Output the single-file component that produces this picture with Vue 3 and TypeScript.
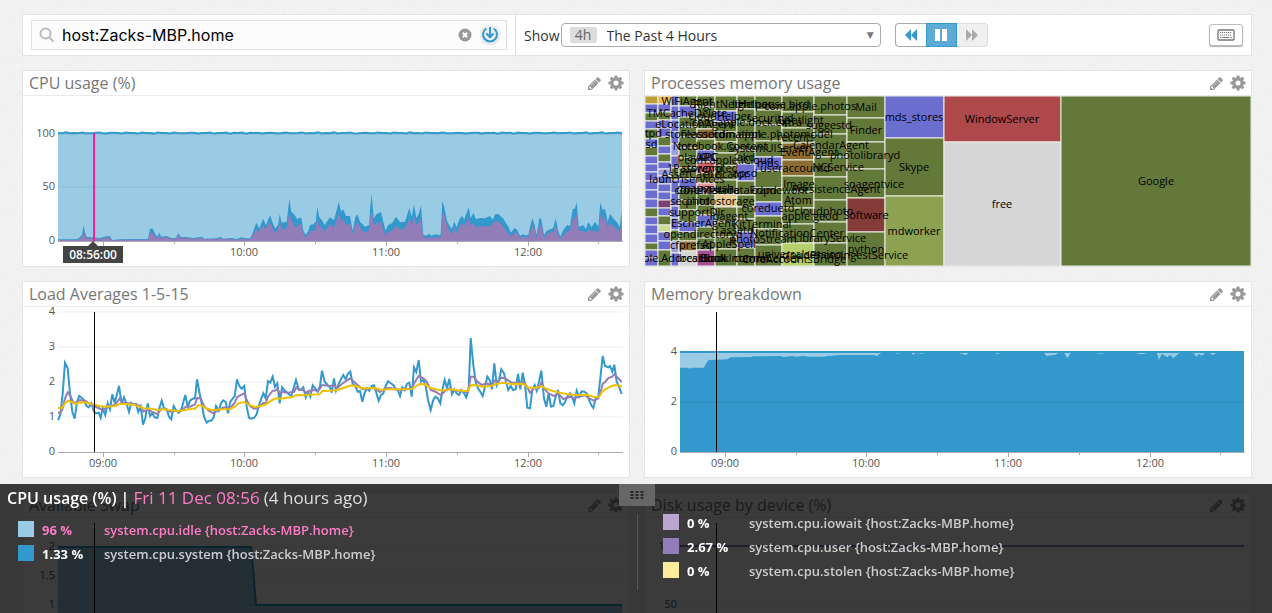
<script setup lang="ts">
import { computed, onBeforeUnmount, onMounted, ref } from 'vue'

type Point = [number, number]
interface Tick { label: string; y: number }
interface Shape { points: Point[]; color: string; opacity?: number }
interface Chart {
  title: string
  ticks: Tick[]
  areas: Shape[]
  lines: Shape[]
  cursor?: string
}

const SPAN = 1692
const BASE = 145
const LEFT = 35

/* Samples are "time,level" pairs in thirds of a pixel; shift aligns a segment on the time axis. */
function samples(text: string, shift: number, zero: number): Point[] {
  return text.trim().split(/\s+/).map((pair) => {
    const [t, level] = pair.split(',').map(Number)
    return [t + shift, BASE - (zero - level) / 3]
  })
}
function series(first: string, second: string, zero: number): Point[] {
  return [...samples(first, -114, zero), ...samples(second, 816, zero)]
}

const cpuSystem = series(
  '114,388 170,388 180,382 186,374 191,346 195,366 200,381 222,382 240,384 260,379 270,378 276,390 300,388 330,387 384,387 390,356 398,356 406,373 412,380 418,369 424,380 440,378 455,385 468,383 475,370 482,381 500,381 520,384 546,380 552,386 590,385 602,381 610,386 635,384 650,387 664,382 675,385 690,385 697,372 709,338 718,355 730,326 738,346 745,328 751,316 758,340 766,355 774,345 779,313 785,338 800,335 808,266 814,306 822,312 832,328 838,323 844,323 850,362 857,374 864,365 870,345 880,343 887,335 892,290 898,322 905,330 914,345 922,333 930,322',
  '12,330 20,300 26,276 34,305 40,298 48,318 60,318 68,362 76,322 82,313 90,335 105,350 117,345 121,290 125,252 131,325 140,312 153,306 160,335 167,362 174,345 186,340 198,320 210,337 225,335 238,294 245,320 252,283 259,325 266,312 273,286 280,374 290,377 296,371 304,377 316,373 330,376 332,370 337,274 342,288 352,335 365,357 373,335 380,352 388,328 396,318 403,328 416,292 422,325 430,308 438,328 450,324 465,325 480,318 488,330 495,313 505,312 520,326 535,350 543,368 553,354 562,360 570,377 578,373 585,376 595,375 600,350 607,325 614,345 619,374 624,350 628,324 634,328 642,375 650,362 670,354 677,325 684,360 691,380 700,360 712,345 720,348 728,298 735,295 740,277 746,350 760,346 768,357 775,336 785,352 795,335 805,350 811,278 818,300 825,296 833,335 840,312 850,325 862,338 869,352 875,305',
  393)
const cpuUser = series(
  '114,390 170,390 180,386 186,380 191,360 195,378 200,385 222,385 240,387 260,383 270,381 276,391 300,390 330,389 384,389 390,368 398,368 406,380 412,385 418,376 424,384 440,381 455,387 468,386 475,375 482,385 500,384 520,386 546,383 552,388 590,387 602,385 610,388 635,387 650,389 664,386 675,388 690,388 697,378 704,365 709,358 716,366 722,356 730,346 738,358 745,343 751,338 758,355 766,370 774,360 779,332 785,355 796,360 802,350 808,303 814,330 822,345 830,353 838,338 844,345 850,372 857,382 864,375 870,364 886,362 892,322 897,346 905,353 914,364 922,352 930,345',
  '12,352 20,330 26,310 34,332 40,328 48,345 60,340 68,374 76,345 82,335 90,352 105,368 117,360 121,320 125,300 131,345 140,340 153,335 160,360 167,378 174,365 186,362 198,347 210,357 225,355 238,326 245,344 252,318 259,345 266,338 273,325 280,383 332,382 337,308 342,315 352,350 365,373 373,355 380,370 388,350 396,340 403,345 416,325 422,348 430,338 438,352 460,348 480,350 492,335 506,334 520,350 535,370 543,380 553,370 562,368 570,382 595,382 600,365 607,345 614,360 619,383 624,365 628,345 636,350 642,384 650,372 670,365 677,346 684,372 691,386 700,375 712,365 720,360 728,330 735,325 740,310 746,362 760,363 768,370 775,358 785,365 795,360 805,368 811,312 818,330 825,320 833,352 840,338 850,350 862,358 869,366 875,330',
  393)
const load1 = series(
  '114,420 121,405 128,340 135,248 143,265 150,340 157,395 164,416 171,365 178,348 190,358 200,378 206,382 214,370 222,395 228,400 236,398 242,414 248,385 256,405 263,370 270,388 277,343 284,370 297,318 305,372 312,352 320,372 327,396 334,368 341,374 348,372 355,396 362,380 369,434 376,415 383,370 390,408 397,400 404,412 412,414 418,385 425,362 432,385 440,388 447,410 454,418 461,378 468,390 476,398 485,385 496,345 503,380 510,362 518,356 525,355 531,298 538,335 546,375 552,410 560,428 567,422 574,422 581,412 588,378 596,392 603,370 610,361 617,366 624,400 631,365 644,348 651,298 658,318 665,326 673,318 680,380 687,413 694,416 702,414 710,402 717,375 730,340 737,355 744,303 751,308 758,290 765,320 772,310 779,370 786,322 793,330 806,342 814,348 822,320 828,300 836,328 843,330 850,322 857,352 864,335 871,350 878,316 886,326 893,335 900,318 906,272 914,305 922,314 930,322',
  '5,338 12,295 18,332 26,312 33,298 40,285 47,298 54,281 61,275 68,312 76,318 83,335 90,333 97,365 104,338 111,325 118,332 125,318 132,316 139,338 146,362 153,345 160,340 167,318 174,304 182,310 190,315 196,325 203,330 210,348 217,322 224,330 231,312 238,308 245,350 252,262 259,276 266,240 273,305 280,300 287,318 294,360 302,390 309,362 316,350 323,355 331,370 338,325 344,300 351,325 358,297 366,343 373,328 380,340 387,345 394,330 401,338 409,352 416,325 422,174 430,255 437,305 444,325 451,335 458,348 465,320 472,290 479,300 486,328 493,250 500,315 507,300 514,268 522,280 528,305 535,330 542,318 549,330 557,328 564,282 571,328 578,278 585,312 592,383 600,385 607,330 614,315 620,332 627,305 634,272 642,355 649,380 656,340 663,380 670,378 677,350 684,330 691,370 698,376 705,366 712,350 720,340 727,352 733,370 740,332 747,350 755,334 762,335 770,340 777,360 784,376 790,384 797,355 805,350 811,295 818,228 825,258 835,262 840,258 847,275 853,254 860,305 867,320 875,342',
  516)
const load5 = series(
  '114,398 121,398 128,385 135,355 143,337 150,345 160,368 168,368 178,360 195,362 210,372 222,378 235,384 248,390 258,385 265,378 285,375 299,355 306,368 325,370 350,374 362,378 370,395 383,388 395,395 412,402 425,386 435,388 450,395 465,392 480,395 497,380 510,380 525,373 532,354 542,355 552,378 566,392 581,400 592,392 612,382 630,385 644,368 651,352 660,346 673,340 680,360 690,378 702,386 714,384 728,370 738,368 744,350 758,332 765,332 772,326 780,342 787,335 800,338 822,336 829,322 838,330 850,330 858,338 870,332 878,330 895,332 900,325 907,315 930,318',
  '12,315 20,325 40,308 61,295 75,308 97,328 130,323 150,336 165,325 180,324 205,330 230,328 245,325 255,305 266,288 280,295 290,305 302,330 318,336 333,346 345,333 358,325 372,332 395,332 413,338 416,325 422,290 430,290 440,302 455,315 470,310 486,318 493,302 505,304 514,293 525,295 545,308 565,308 571,318 578,305 590,318 600,338 612,325 627,325 634,308 642,325 655,340 672,348 684,340 700,357 720,350 733,356 745,350 765,346 780,357 792,362 805,355 811,340 818,312 826,305 835,294 847,290 854,282 862,292 875,306',
  516)
const load15 = series(
  '114,384 125,384 135,370 145,362 155,366 165,372 180,367 200,368 220,373 240,379 260,380 285,378 298,372 320,372 345,375 370,385 395,386 415,391 430,387 445,390 475,393 495,390 515,386 525,386 535,375 545,377 560,386 580,391 600,388 630,387 645,380 655,370 673,366 690,376 705,381 722,378 738,373 757,360 772,354 780,356 818,351 828,345 850,346 860,344 898,343 907,333 930,332',
  '25,329 45,322 65,316 80,319 95,325 135,324 155,330 180,327 200,328 245,327 268,312 285,313 300,323 335,332 360,328 400,333 413,333 422,316 435,315 458,320 485,317 497,312 520,308 545,312 580,311 595,323 620,323 634,318 648,326 668,333 690,338 710,342 735,345 770,344 792,351 807,350 818,333 840,320 855,315 875,319',
  516)
const memoryUsed = samples(
  '99,263 115,263 120,265 128,265 130,263 158,263 163,252 170,240 217,238 225,232 275,231 280,229 350,228 355,231 380,228 385,230 405,228 420,230 458,230 462,228 500,225 580,225 587,228 598,219 630,219 640,221 645,219 672,219 678,224 684,219 700,221 705,219 790,219 800,222 808,225 815,219 880,219 887,222 893,219 1002,219 1008,228 1030,224 1038,219 1052,219 1060,235 1068,219 1130,219 1145,221 1150,219 1225,219 1245,223 1258,219 1282,219 1287,240 1294,221 1308,232 1315,224 1323,234 1338,219 1372,219 1381,230 1386,221 1393,227 1402,219 1413,219 1420,225 1430,219 1498,219',
  -99, 516).map(([t, y]): Point => [t * SPAN / 1399, y])

const flat = (y: number): Point[] => [[0, y], [SPAN, y]]
const total: Point[] = Array.from({ length: 142 }, (_, i) => [i * 12, 37 + Math.sin(i * 2.3) * Math.sin(i * 0.7) * 0.7])
const swap: Point[] = [[0, 29], [580, 29], [594, 87], [SPAN, 87]]

const LIGHT = '#9acbe4'
const BLUE = '#3398cc'
const PURPLE = '#927db8'
const charts: Record<string, Chart> = {
  cpu: {
    title: 'CPU usage (%)',
    ticks: [{ label: '0', y: 145 }, { label: '50', y: 91 }, { label: '100', y: 38 }],
    areas: [
      { points: total, color: LIGHT },
      { points: cpuSystem, color: BLUE },
      { points: cpuUser, color: PURPLE },
    ],
    lines: [{ points: total, color: BLUE }],
    cursor: '08:56:00',
  },
  load: {
    title: 'Load Averages 1-5-15',
    ticks: [0, 1, 2, 3, 4].map((n) => ({ label: String(n), y: BASE - n * 35 })),
    areas: [],
    lines: [
      { points: load1, color: BLUE },
      { points: load5, color: PURPLE },
      { points: load15, color: '#efc000' },
    ],
  },
  memory: {
    title: 'Memory breakdown',
    ticks: [{ label: '0', y: 145 }, { label: '2', y: 95 }, { label: '4', y: 45 }],
    areas: [{ points: flat(44), color: LIGHT }, { points: memoryUsed, color: BLUE }],
    lines: [{ points: flat(45), color: BLUE }],
  },
  swap: {
    title: 'Available Swap',
    ticks: [{ label: '2', y: 29 }, { label: '1.5', y: 58 }, { label: '1', y: 87 }],
    areas: [{ points: swap, color: LIGHT }],
    lines: [{ points: swap, color: BLUE }],
  },
  disk: {
    title: 'Disk usage by device (%)',
    ticks: [{ label: '100', y: 29 }, { label: '50', y: 87 }],
    areas: [],
    lines: [{ points: flat(28), color: PURPLE }],
  },
}
const panels = ['cpu', 'tree', 'load', 'memory', 'swap', 'disk']
const panelTitle = (id: string): string => charts[id]?.title ?? 'Processes memory usage'

const grid = ref<HTMLElement | null>(null)
const bodyWidth = ref(606)
let observer: ResizeObserver | undefined
function measure(): void {
  const body = grid.value?.querySelector('.panel-body')
  if (body) bodyWidth.value = body.clientWidth
}
onMounted(() => {
  measure()
  observer = new ResizeObserver(measure)
  if (grid.value) observer.observe(grid.value)
})
onBeforeUnmount(() => observer?.disconnect())

const plotWidth = computed(() => bodyWidth.value - 42)
const sx = (t: number): number => LEFT + (t / SPAN) * plotWidth.value
const linePath = (points: Point[]): string => points.map(([t, y]) => `${sx(t).toFixed(1)},${y.toFixed(1)}`).join(' ')
const areaPath = (points: Point[]): string => `${sx(points[0][0])},${BASE} ${linePath(points)} ${sx(SPAN)},${BASE}`
const minuteX = (minute: number): number => Math.round(LEFT + (minute / 239) * plotWidth.value)
const hours = [{ label: '09:00', at: 19 }, { label: '10:00', at: 79 }, { label: '11:00', at: 139 }, { label: '12:00', at: 199 }]
const halves = [49, 109, 169, 229]
const cursorX = computed(() => minuteX(15) + 1)

const palette: Record<string, string> = {
  g: '#637939', b: '#6b6ecf', r: '#ad494a', s: '#d6d6d6', o: '#8ca252', m: '#843c39', n: '#8c6d31',
  l: '#b5cf6b', p: '#e7cb94', k: '#d6616b', v: '#a55194', y: '#bd9e39', e: '#e7ba52',
  w: '#7b4173', c: '#cedb9c', t: '#e7969c', q: '#9c9ede',
}
/* left, right, row edges, one palette letter per row */
const columns: [number, number, number[], string][] = [
  [0, 13, [0, 8, 17, 25, 33, 43, 51, 60, 68, 76, 85, 94, 103, 112, 121, 129, 138, 147, 154, 162, 170], 'ybgbgbgbbbbbbgbbbgbb'],
  [13, 26, [0, 8, 16, 24, 32, 41, 50, 58, 66, 73, 80, 88, 96, 104, 112, 120, 129, 136, 145, 154, 170], 'ebgbbgbgbqbbbwbgcbbg'],
  [26, 34, [0, 10, 24, 36, 48, 60, 72, 84, 97, 110, 122, 134, 145, 157, 170], 'bbbbqbgbbbbgqb'],
  [34, 52, [0, 10, 21, 31, 41, 52, 62, 72, 83, 93, 104, 114, 126, 136, 145, 155, 170], 'gbggggggbgggbgns'],
  [52, 70, [0, 11, 23, 33, 43, 54, 66, 77, 87, 98, 109, 119, 131, 142, 154, 170], 'gggngbkgtggbggv'],
  [70, 92, [0, 15, 26, 36, 46, 57, 70, 84, 98, 111, 126, 141, 153, 170], 'gbggggggpgggg'],
  [92, 110, [0, 13, 26, 41, 54, 68, 85, 99, 111, 123, 136, 152, 170], 'gggggbggggbg'],
  [110, 137, [0, 14, 29, 45, 61, 75, 92, 106, 120, 133, 149, 170], 'ggggbggbggg'],
  [137, 169, [0, 16, 32, 47, 64, 80, 96, 112, 128, 147, 170], 'gggnnggggl'],
  [169, 202, [0, 19, 38, 61, 81, 104, 126, 147, 170], 'gggggggg'],
  [202, 240, [0, 22, 46, 73, 102, 136, 170], 'ggggmg'],
  [240, 299, [0, 42, 100, 170], 'bgo'],
  [299, 416, [0, 46, 170], 'rs'],
  [416, 606, [0, 170], 'g'],
]
const cells = columns.flatMap(([left, right, rows, colors]) =>
  [...colors].map((c, i) => ({ x: left, y: rows[i], w: right - left, h: rows[i + 1] - rows[i], fill: palette[c] })))
const labels: [string, number, number][] = [
  ['WiFiAgent', 42, 5], ['TMCacheDelete', 42, 17], ['eLocationAgent', 50, 28], ['storeassetd', 50, 38], ['tccd', 43, 50],
  ['playXPC', 53, 61], ['1Password', 50, 72], ['AssetCache', 46, 78], ['launchservices', 42, 83], ['contextstore', 62, 94],
  ['secinitd', 45, 105], ['supportDir', 52, 116], ['EscherAgent', 58, 127], ['opendirectoryd', 58, 138], ['cfprefsd', 46, 149],
  ['com.apple.AddressBook', 22, 162], ['ntpd', 5, 37], ['lsd', 5, 48],
  ['RightNetHelper', 88, 8], ['cloudHelper', 75, 20], ['filecoordination', 76, 38], ['Notebook.Content', 75, 50],
  ['XRC', 62, 61], ['storenoted', 65, 72], ['com.apple.iCloud', 84, 64], ['eLocator', 81, 78], ['mapspush', 62, 92],
  ['CoreMetadataFramework', 97, 94], ['photostorage', 75, 105], ['ibagent', 84, 120], ['assetd', 92, 134], ['AppleSpell', 84, 148],
  ['localBook', 57, 162], ['Book.Internal', 89, 162],
  ['lighthouse', 114, 8], ['com.apple.dock.extra', 102, 26], ['com.apple.photomodel', 128, 38], ['SystemUIServer', 124, 52],
  ['akd', 101, 61], ['mds', 123, 67], ['apsd', 100, 77], ['securityd', 125, 22], ['cdpd', 119, 94], ['coreduetd', 123, 112],
  ['KitTerminal', 117, 128], ['photoStream', 118, 143], ['commCenter', 122, 162],
  ['bird', 154, 8], ['com.apple.photos', 165, 10], ['Spotlight', 156, 24], ['recents', 151, 41], ['EventAgent', 164, 56],
  ['useraccountd', 150, 72], ['Image', 154, 88], ['Atom', 153, 104], ['apple.geod', 165, 120], ['NotificationCenter', 152, 137],
  ['universalsession', 155, 158], ['CoreAccountsBridge', 149, 163],
  ['suggestd', 184, 29], ['CalendarAgent', 186, 49], ['NCService', 193, 71], ['PersistenceAgent', 191, 93],
  ['cloudphoto', 179, 115], ['LibraryService', 185, 142], ['cloudPhotoIngestService', 200, 159],
  ['Mail', 221, 11], ['Finder', 221, 34], ['photolibraryd', 220, 59], ['soagentvice', 229, 88], ['Software', 221, 119],
  ['python', 221, 153], ['mds_stores', 269, 21], ['Skype', 269, 71], ['mdworker', 269, 135],
  ['WindowServer', 357, 23], ['free', 357, 108], ['Google', 511, 85],
]
const treeScale = computed(() => bodyWidth.value / 606)

const query = ref('host:Zacks-MBP.home')
const legend = [
  [
    { color: '#9acbe4', value: '96 %', name: 'system.cpu.idle {host:Zacks-MBP.home}', active: true },
    { color: '#3398cc', value: '1.33 %', name: 'system.cpu.system {host:Zacks-MBP.home}', active: false },
  ],
  [
    { color: '#bba5d3', value: '0 %', name: 'system.cpu.iowait {host:Zacks-MBP.home}', active: false },
    { color: '#927db8', value: '2.67 %', name: 'system.cpu.user {host:Zacks-MBP.home}', active: false },
    { color: '#ffeb9f', value: '0 %', name: 'system.cpu.stolen {host:Zacks-MBP.home}', active: false },
  ],
]
</script>

<template>
  <div class="page">
    <svg class="texture" aria-hidden="true">
      <filter id="paper">
        <feTurbulence type="fractalNoise" baseFrequency="0.5" numOctaves="2" seed="4" />
        <feColorMatrix values="0 0 0 0 0  0 0 0 0 0  0 0 0 0 0  0 0 0 0.04 0" />
      </filter>
      <rect width="100%" height="100%" filter="url(#paper)" />
    </svg>
    <header class="toolbar">
      <div class="search-zone">
        <label class="search">
          <svg class="search-icon" viewBox="0 0 16 16" aria-hidden="true"><circle cx="6.5" cy="6.5" r="5" /><path d="M10 10l4.5 4.5" /></svg>
          <input v-model="query" type="text" aria-label="Search" spellcheck="false">
          <button class="bare clear" type="button" aria-label="Clear">
            <svg viewBox="0 0 14 14" width="14" height="14"><circle cx="7" cy="7" r="6.5" fill="#999" /><path d="M4.8 4.8l4.4 4.4M9.2 4.8l-4.4 4.4" stroke="#fff" stroke-width="2" /></svg>
          </button>
          <button class="bare" type="button" aria-label="Save">
            <svg viewBox="0 0 22 22" width="22" height="22"><circle cx="11" cy="11" r="10.5" fill="#ececec" /><path d="M7.3 4.5A7 7 0 1 0 14.7 4.5" fill="none" stroke="#3398cc" stroke-width="2" /><path d="M11 3v10M7.5 9.5l3.5 3.8 3.5-3.8" fill="none" stroke="#3398cc" stroke-width="2" /></svg>
          </button>
        </label>
      </div>
      <label class="show" for="range">Show</label>
      <div class="range">
        <span class="badge">4h</span>
        <select id="range"><option>The Past 4 Hours</option></select>
        <span class="caret" aria-hidden="true">▼</span>
      </div>
      <div class="transport">
        <button class="back" type="button" aria-label="Back"><svg viewBox="0 0 12 12" width="12" height="12"><path d="M6 0v12L0 6zM12 0v12L6 6z" /></svg></button>
        <button class="pause" type="button" aria-label="Pause"><svg viewBox="0 0 12 12" width="12" height="12"><path d="M0 0h5v12H0zM7 0h5v12H7z" /></svg></button>
        <button class="next" type="button" aria-label="Forward" disabled><svg viewBox="0 0 12 12" width="12" height="12"><path d="M0 0v12l6-6zM6 0v12l6-6z" /></svg></button>
      </div>
      <button class="keys" type="button" aria-label="Keyboard shortcuts">
        <svg viewBox="0 0 18 12" width="18" height="12"><rect x="1" y="1" width="16" height="10" rx="1" fill="none" stroke="#777" stroke-width="1.3" /><path d="M3 3.5h12M3 6h12" stroke="#777" stroke-width="1.2" stroke-dasharray="1.2 .8" /><path d="M3 8.5h1.3M5.5 8.5h7M13.7 8.5H15" stroke="#777" stroke-width="1.2" /></svg>
      </button>
    </header>

    <main ref="grid" class="grid">
      <section v-for="id in panels" :key="id" class="panel">
        <div class="panel-head">
          <h2>{{ panelTitle(id) }}</h2>
          <button class="bare" type="button" aria-label="Edit">
            <svg viewBox="128 128 1536 1536" width="13" height="13" fill="#999"><path d="M491 1536l91-91-235-235-91 91v107h128v128h107zm523-928q0-22-22-22-10 0-17 7l-542 542q-7 7-7 17 0 22 22 22 10 0 17-7l542-542q7-7 7-17zm-54-192l416 416-832 832h-416v-416zm683 96q0 53-37 90l-166 166-416-416 166-165q36-38 90-38 53 0 91 38l235 234q37 39 37 91z" /></svg>
          </button>
          <button class="bare" type="button" aria-label="Settings">
            <svg viewBox="0 0 16 16" width="16" height="16"><circle cx="8" cy="8" r="4.1" fill="none" stroke="#999" stroke-width="3.2" /><g fill="#999"><path v-for="a in 8" :key="a" :transform="`rotate(${a * 45} 8 8)`" d="M6.2 3L6.7.4h2.6L9.8 3z" /></g></svg>
          </button>
        </div>
        <div class="panel-body">
          <svg v-if="charts[id]" class="chart" role="img" :aria-label="charts[id].title">
            <polygon v-for="(area, i) in charts[id].areas" :key="'a' + i" :points="areaPath(area.points)" :fill="area.color" />
            <g v-for="tick in charts[id].ticks" :key="tick.label">
              <line v-if="tick.y < BASE" class="rule" :x1="LEFT" :x2="bodyWidth - 6" :y1="tick.y" :y2="tick.y" />
              <text class="axis" x="32" :y="tick.y + 3" text-anchor="end">{{ tick.label }}</text>
            </g>
            <polyline v-for="(line, i) in charts[id].lines" :key="'l' + i" class="trend" :points="linePath(line.points)" :stroke="line.color" />
            <line class="base" :x1="LEFT" :x2="bodyWidth - 6" y1="145" y2="145" />
            <g v-for="hour in hours" :key="hour.label">
              <line class="base" :x1="minuteX(hour.at)" :x2="minuteX(hour.at)" y1="145" y2="150" />
              <text v-if="!charts[id].cursor || hour.at > 30" class="axis" :x="minuteX(hour.at)" y="160" text-anchor="middle">{{ hour.label }}</text>
            </g>
            <line v-for="half in halves" :key="half" class="base" :x1="minuteX(half)" :x2="minuteX(half)" y1="145" y2="148" />
            <g v-if="charts[id].cursor">
              <line class="hot" :x1="cursorX" :x2="cursorX" y1="37" y2="145" />
              <path class="tip" :d="`M${cursorX - 31} 150h25l5-5 5 5h25v17h-60z`" />
              <text class="tip-text" :x="cursorX - 1" y="163" text-anchor="middle">{{ charts[id].cursor }}</text>
            </g>
            <line v-else class="cursor" :x1="cursorX" :x2="cursorX" y1="5" y2="145" />
          </svg>
          <svg v-else class="chart tree" role="img" aria-label="Processes memory usage">
            <rect v-for="(cell, i) in cells" :key="i" :x="cell.x * treeScale" :y="cell.y" :width="cell.w * treeScale" :height="cell.h" :fill="cell.fill" />
            <text v-for="([name, cx, cy], i) in labels" :key="'t' + i" :x="cx * treeScale" :y="cy + 4" text-anchor="middle">{{ name }}</text>
          </svg>
        </div>
      </section>
    </main>

    <aside class="drawer">
      <button class="handle" type="button" aria-label="Resize">
        <svg viewBox="0 0 14 8" width="14" height="8"><g fill="#2b2b2b"><template v-for="r in 3" :key="r"><rect v-for="c in 3" :key="c" :x="(c - 1) * 5 + 0.5" :y="(r - 1) * 3" width="3" height="2" /></template></g></svg>
      </button>
      <h3>CPU usage (%) | <em>Fri 11 Dec 08:56</em> <span>(4 hours ago)</span></h3>
      <ul v-for="(group, g) in legend" :key="g" :class="['legend', g ? 'second' : 'first']">
        <li v-for="item in group" :key="item.name" :class="{ active: item.active }">
          <i class="swatch" :style="{ background: item.color }"></i>
          <b>{{ item.value }}</b>
          <span>{{ item.name }}</span>
        </li>
      </ul>
    </aside>
  </div>
</template>

<style>
body { margin: 0; background: #f6f6f6; }
</style>

<style scoped>
* { box-sizing: border-box; }
.page {
  position: relative;
  height: 100vh;
  overflow: hidden;
  padding: 14px 20px 0 22px;
  font-family: "Open Sans", "Noto Sans", sans-serif;
  color: #333;
}
.texture { position: absolute; inset: 0; width: 100%; height: 100%; }
button { font: inherit; cursor: pointer; }
.bare { display: flex; padding: 0; border: 0; background: none; }

.toolbar {
  position: relative;
  display: flex;
  align-items: center;
  height: 42px;
  margin-bottom: 14px;
  padding-right: 8px;
  border: 1px solid #e4e4e4;
  background: #fff;
}
.search-zone { flex: 0 1 493px; height: 40px; padding: 5px 8px; border-right: 1px solid #ddd; }
.search {
  display: flex;
  align-items: center;
  height: 30px;
  padding: 0 5px 0 7px;
  border: 1px solid #e2e2e2;
  background: #fcfcfc;
}
.search-icon { width: 16px; height: 16px; fill: none; stroke: #bbb; stroke-width: 2; }
.search input {
  flex: 1;
  min-width: 0;
  padding: 0 7px;
  border: 0;
  outline: 0;
  background: none;
  color: #000;
  font: 16px Inter, sans-serif;
}
.clear { margin-right: 7px; }
.show { margin: 0 1px 0 8px; font-size: 14px; }
.range { position: relative; flex: 0 1 320px; height: 24px; }
.range select {
  width: 100%;
  height: 24px;
  padding: 0 24px 0 45px;
  border: 1px solid #aaa;
  border-radius: 4px;
  appearance: none;
  background: #fff;
  color: #333;
  font: 14px "Open Sans", sans-serif;
}
.badge {
  position: absolute;
  left: 9px;
  top: 4px;
  width: 27px;
  border-radius: 2px;
  background: #ddd;
  color: #666;
  font-size: 14px;
  line-height: 16px;
  text-align: center;
}
.caret { position: absolute; right: 7px; top: 4px; color: #777; font: 9px/16px "DejaVu Sans", sans-serif; }
.transport { display: flex; margin-left: 14px; }
.transport button {
  display: flex;
  align-items: center;
  justify-content: center;
  width: 31px;
  height: 24px;
  padding: 0;
  border: 1px solid #aaa;
  background: #fff;
}
.transport .back { border-right: 0; border-radius: 4px 0 0 4px; fill: #3398cc; }
.transport .pause { border-color: #3398cc; background: #5babd6; fill: #fff; }
.transport .next { border-color: #ddd; border-left: 0; border-radius: 0 4px 4px 0; background: #f0f0f0; fill: #aaa; }
.keys {
  display: flex;
  align-items: center;
  justify-content: center;
  width: 34px;
  height: 22px;
  margin-left: auto;
  padding: 0;
  border: 1px solid #bbb;
  border-radius: 3px;
  background: #fff;
  box-shadow: 0 1px 1px #aaa;
}

.grid { position: relative; display: grid; grid-template-columns: repeat(2, minmax(0, 1fr)); gap: 14px; }
.panel { border: 1px solid #e4e4e4; background: #fff; }
.panel-head {
  display: flex;
  align-items: center;
  gap: 7px;
  height: 25px;
  padding: 0 5px 0 6px;
  border-bottom: 1px solid #eaeaea;
}
.panel-head h2 { flex: 1; margin: 0; color: #777; font-size: 16px; font-weight: 400; line-height: 24px; }
.panel-body { height: 170px; }
.chart { display: block; width: 100%; height: 170px; overflow: hidden; }
.axis { fill: #555; font-size: 11px; }
.rule { stroke: #000; stroke-opacity: .035; stroke-width: 2; }
.base { stroke: #aaa; stroke-width: 1; shape-rendering: crispEdges; }
.trend { fill: none; stroke-width: 2; }
.cursor { stroke: #000; stroke-width: 1; shape-rendering: crispEdges; }
.hot { stroke: #f71d9c; stroke-width: 2; }
.tip { fill: #444; }
.tip-text { fill: #fff; font-size: 12px; font-weight: 600; }
.tree rect { stroke: #eef0e8; stroke-width: 1; }
.tree text { fill: #000; font-size: 11px; }

.drawer {
  position: fixed;
  right: 0;
  bottom: 0;
  left: 0;
  display: grid;
  grid-template-columns: 637px 1fr;
  grid-template-rows: 30px 99px;
  background: rgba(0, 0, 0, .77);
}
.handle {
  position: absolute;
  left: 619px;
  top: 0;
  display: flex;
  align-items: center;
  justify-content: center;
  width: 36px;
  height: 22px;
  padding: 0;
  border: 0;
  background: #666;
}
.drawer h3 { margin: 0; padding-left: 7px; color: #fff; font-size: 16px; font-weight: 600; line-height: 28px; }
.drawer em { color: #ff7bc8; font-size: 17px; font-style: normal; font-weight: 500; }
.drawer h3 span { color: #ddd; font-size: 17px; font-weight: 400; }
.legend { grid-row: 2; height: 76px; margin: 0; padding: 0; list-style: none; }
.first { padding: 7px 0 0 18px; }
.second { grid-column: 2; padding-left: 25px; border-left: 1px solid #555; }
.legend li { display: flex; height: 24px; color: #ccc; font-size: 13px; font-weight: 600; line-height: 18px; }
.swatch { width: 16px; height: 16px; margin-right: 8px; }
.legend b { width: 62px; color: #fff; font-weight: 700; }
.legend .active, .legend .active b { color: #ff7bc8; }
</style>
